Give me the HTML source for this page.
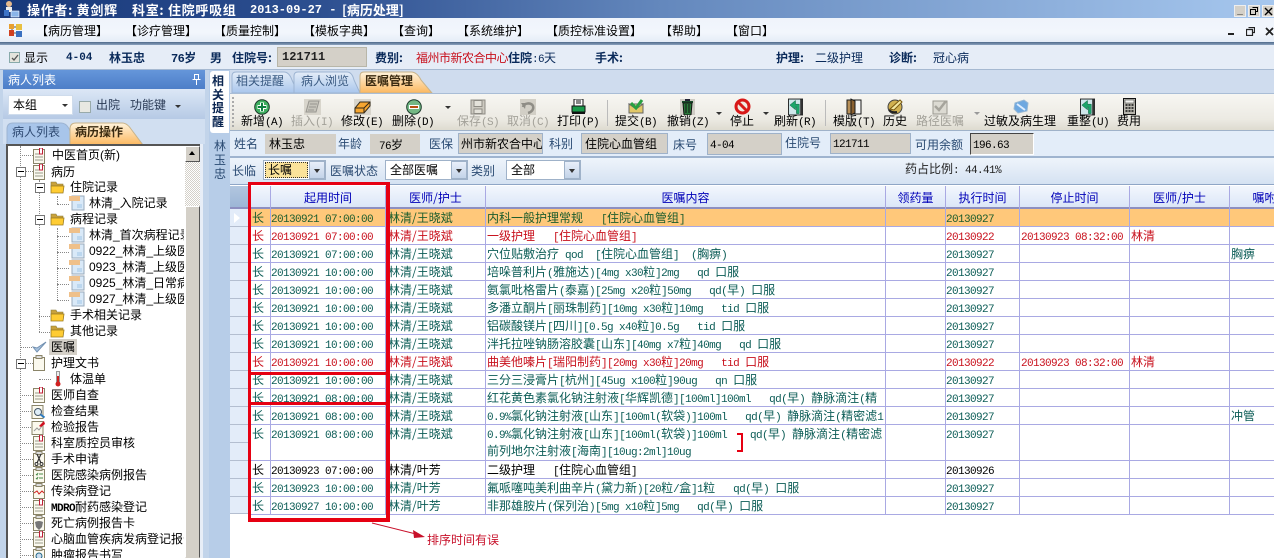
<!DOCTYPE html>
<html><head><meta charset="utf-8"><style>
html,body{margin:0;padding:0;background:#fff}
#p{position:relative;width:1274px;height:558px;overflow:hidden;background:#fff;font:12px/16px "WenQuanYi Zen Hei","Noto Sans CJK SC",sans-serif;color:#000}
#p div,#p span.t,#p svg{position:absolute}
.t{position:absolute;white-space:pre}
i{font:normal 11px "Liberation Mono",monospace;letter-spacing:-.6px}
.b{font-weight:bold}
.box{background:#d4d0c8;border:1px solid #9fb2c9;box-sizing:border-box;padding:1px 0 0 4px;white-space:pre;overflow:hidden;line-height:16px}
.dd{background:#fff;border:1px solid #9fb2c9;box-sizing:border-box;white-space:pre;padding:1px 0 0 4px;line-height:16px}
.ar{background:linear-gradient(#e8effa,#c3d3e8);border:1px solid #9fb2c9;box-sizing:border-box}
.ar:after{content:"";position:absolute;left:4px;top:7px;border:3px solid transparent;border-top:4px solid #333}
.tb{text-align:center;white-space:pre;top:113px;line-height:16px;font-size:12px;width:80px}
.tb.d{color:#a3a199}
.tb.d i{color:#a3a199}
.h{top:186px;height:23px;background:linear-gradient(#f3f7fd,#dbe6f8);color:#0000b8;text-align:center;line-height:23px;box-sizing:border-box;white-space:pre;border-right:1px solid #8f91c5;border-bottom:2px solid #8d8fc0}
.r{left:250px;width:1024px;height:18px;box-sizing:border-box;border-bottom:1px solid #a9a9e3;line-height:17px;color:#0b5c56;white-space:pre}
.r.o{background:#ffc87a;color:#1c5c2c}.r.x{color:#c8101c}.r.k{color:#000}
.r span{position:absolute;top:0;white-space:pre;overflow:hidden}
.a{left:2px}.b1{left:21px}.c{left:138px}.e{left:237px;width:398px}.f{left:696px}.g{left:771px}.m{left:881px}.n{left:981px}
.g1{left:230px;width:20px;height:18px;background:#e3ecf9;box-sizing:border-box;border-bottom:1px solid #b4bed0;border-right:1px solid #b4bed0}
.v{top:186px;height:329px;width:1px;background:#a9a9e3}
.tr{white-space:pre;font:12px/16px "Liberation Sans","WenQuanYi Zen Hei",sans-serif;color:#000}
.dh{border-top:1px dotted #888;height:0}
.dv{border-left:1px dotted #888;width:0}
.pm{width:8px;height:8px;border:1px solid #777;background:#fff}
.pm:after{content:"";position:absolute;left:1px;top:3px;width:6px;height:2px;background:linear-gradient(#000 50%,transparent 50%)}
.rb{background:#e60012;position:absolute}
.ti{color:#fff;font-size:13px;line-height:16px;letter-spacing:.7px;top:2px}
</style></head><body><div id="p">
<svg width="0" height="0" style="left:0;top:0"><defs>
<symbol id="doc" viewBox="0 0 12 16"><rect x=".5" y="1.5" width="11" height="14" fill="#fbf9ee" stroke="#8a8468"/><path d="M2 6h8M2 9h8M2 12h8" stroke="#9a9a8a"/><rect x="6.5" y="0" width="3" height="6" fill="#fff" stroke="#c0203a"/></symbol>
<symbol id="nt" viewBox="0 0 12 16"><rect x=".5" y="2.5" width="11" height="13" fill="#fbf9ee" stroke="#8a8468"/><rect x="3" y=".5" width="6" height="3" fill="#ddd" stroke="#8a8468"/></symbol>
<symbol id="fd" viewBox="0 0 15 14"><path d="M1 2h5l1 2h6v2H1z" fill="#c9a23c" stroke="#8a7a3a" stroke-width=".6"/><path d="M1 13L1 6h13l-1 7z" fill="#ffcc33" stroke="#9a7a1e" stroke-width=".8"/></symbol>
<symbol id="pg" viewBox="0 0 16 16"><rect x="3" y="1" width="12" height="14" fill="#d9e9f8" stroke="#9ab"/><rect x="0" y="1" width="11" height="5" fill="#efc08a"/><rect x="8" y="9" width="5" height="4" fill="#bcd7ef"/></symbol>
<symbol id="rf" viewBox="0 0 16 18"><rect x=".5" y=".5" width="15" height="17" fill="#cfe6ea" stroke="#222"/><path d="M12 16V6H8V2L2 7l6 5V9h1v7z" fill="#1aa56a" stroke="#0a5a3a" stroke-width=".5"/><rect x="13" y="1" width="2" height="16" fill="#333"/></symbol>
</defs></svg>

<!-- title -->
<div style="left:0;top:0;width:1274px;height:18px;background:linear-gradient(90deg,#17387a 0,#2d4f90 25%,#6488bd 52%,#a6c7ee 100%)"></div>
<svg style="left:2px;top:0" width="18" height="19" viewBox="0 0 18 19"><circle cx="7" cy="4" r="3" fill="#e6b98c"/><rect x="4" y="7" width="6" height="5" fill="#eee"/><rect x="2" y="10" width="5" height="6" fill="#3c74c8"/><rect x="9" y="11" width="8" height="6" fill="#8ab4e8" stroke="#fff" stroke-width=".6"/></svg>
<span class="t b ti" style="left:27px">操作者: 黄剑辉</span>
<span class="t b ti" style="left:132px">科室: 住院呼吸组</span>
<span class="t b" style="left:250px;top:2px;color:#fff;font-size:12px;font-family:'Liberation Mono',monospace;line-height:16px">2013-09-27 - </span>
<span class="t b" style="left:342px;top:2px;color:#fff;font-size:13px;line-height:16px">[病历处理]</span>
<div style="left:1234px;top:5px;width:12px;height:12px;background:#d4d0c8;border:1px solid #eee;box-sizing:border-box;font:bold 10px/10px 'Liberation Sans';text-align:center">_</div>
<div style="left:1248px;top:5px;width:12px;height:12px;background:#d4d0c8;border:1px solid #eee;box-sizing:border-box"><svg style="left:1px;top:1px" width="8" height="8"><path d="M2.5.5h5v4h-2M.5 2.5h5v5h-5z" fill="none" stroke="#000"/></svg></div>
<div style="left:1262px;top:5px;width:12px;height:12px;background:#d4d0c8;border:1px solid #eee;box-sizing:border-box"><svg style="left:1px;top:1px" width="9" height="9"><path d="M1 1l7 7M8 1l-7 7" stroke="#000" stroke-width="1.4"/></svg></div>

<!-- menu -->
<div style="left:0;top:18px;width:1274px;height:25px;background:linear-gradient(#eff4fb,#f2f6fc 60%,#e3ebf6)"></div>
<div style="left:0;top:42px;width:1274px;height:3px;background:linear-gradient(#4f6a8a,#8ba3bf)"></div>
<svg style="left:9px;top:24px" width="14" height="14"><rect x="0" y="0" width="5" height="5" fill="#e8a030"/><rect x="7" y="0" width="6" height="6" fill="#e8c040"/><rect x="0" y="6" width="5" height="6" fill="#d04020"/><rect x="7" y="7" width="6" height="6" fill="#3a70c0"/><path d="M5 3h2M5 9h2M3 5v1" stroke="#555"/></svg>
<span class="t" style="left:36px;top:23px">【病历管理】</span>
<span class="t" style="left:125px;top:23px">【诊疗管理】</span>
<span class="t" style="left:214px;top:23px">【质量控制】</span>
<span class="t" style="left:303px;top:23px">【模板字典】</span>
<span class="t" style="left:392px;top:23px">【查询】</span>
<span class="t" style="left:457px;top:23px">【系统维护】</span>
<span class="t" style="left:546px;top:23px">【质控标准设置】</span>
<span class="t" style="left:660px;top:23px">【帮助】</span>
<span class="t" style="left:726px;top:23px">【窗口】</span>
<div style="left:1228px;top:33px;width:6px;height:2px;background:#222"></div>
<svg style="left:1246px;top:27px" width="9" height="9"><path d="M2.5.5h6v5h-2M.5 2.5h6v6h-6z" fill="none" stroke="#222" stroke-width="1.2"/></svg>
<svg style="left:1265px;top:27px" width="9" height="9"><path d="M1 1l7 7M8 1l-7 7" stroke="#222" stroke-width="1.8"/></svg>

<!-- info -->
<div style="left:0;top:45px;width:1274px;height:25px;background:#e6edf7;border-bottom:1px solid #a6b9d1;box-sizing:border-box"></div>
<div style="left:9px;top:52px;width:11px;height:11px;border:1px solid #8aa;background:#e4e4dc;box-sizing:border-box"><svg style="left:1px;top:1px" width="8" height="8"><path d="M1 4l2 2 4-5" stroke="#555" stroke-width="1.3" fill="none"/></svg></div>
<span class="t" style="left:24px;top:50px">显示</span>
<span class="t b" style="left:66px;top:50px;color:#0a2a5a;font:bold 11px/16px 'Liberation Mono'">4-04</span>
<span class="t b" style="left:109px;top:50px;color:#0a2a5a">林玉忠</span>
<span class="t b" style="left:171px;top:50px;color:#0a2a5a"><i style="font-weight:bold;font-size:12px">76</i>岁</span>
<span class="t b" style="left:210px;top:50px;color:#0a2a5a">男</span>
<span class="t b" style="left:232px;top:50px;color:#0a2a5a">住院号:</span>
<div style="left:277px;top:47px;width:90px;height:20px;background:#d4d0c8;border:1px solid #b8b6a8;box-sizing:border-box;font:bold 12px/18px 'Liberation Mono';padding-left:4px;color:#222">121711</div>
<span class="t b" style="left:375px;top:50px;color:#0a2a5a">费别:</span>
<span class="t" style="left:416px;top:50px;color:#c8101c;letter-spacing:-.5px">福州市新农合中心</span>
<span class="t b" style="left:508px;top:50px;color:#0a2a5a">住院</span>
<span class="t" style="left:532px;top:50px;color:#0a2a5a"><i>:6</i>天</span>
<span class="t b" style="left:595px;top:50px;color:#0a2a5a">手术:</span>
<span class="t b" style="left:776px;top:50px;color:#0a2a5a">护理:</span>
<span class="t" style="left:815px;top:50px;color:#0a2a5a">二级护理</span>
<span class="t b" style="left:889px;top:50px;color:#0a2a5a">诊断:</span>
<span class="t" style="left:933px;top:50px;color:#0a2a5a">冠心病</span>

<!-- left panel -->
<div style="left:0;top:70px;width:230px;height:488px;background:#c2d4ea"></div>
<div style="left:3px;top:70px;width:202px;height:19px;background:linear-gradient(#6596da,#4d7ec8);color:#fff;line-height:19px;padding-left:5px;box-sizing:border-box">病人列表</div>
<svg style="left:192px;top:74px" width="9" height="11"><path d="M2.5.5h4v5h-4zM.5 5.5h8M4.5 6v5" stroke="#fff" fill="none"/></svg>
<div style="left:3px;top:89px;width:202px;height:30px;background:linear-gradient(#dce7f6,#b6cae5)"></div>
<div class="dd" style="left:8px;top:95px;width:65px;height:20px;border-color:#cfdcec">本组</div>
<div style="left:62px;top:104px;border:3px solid transparent;border-top:3px solid #333;width:0;height:0"></div>
<div style="left:79px;top:101px;width:12px;height:12px;background:#e8e8e2;border:1px solid #9aa;box-sizing:border-box"></div>
<span class="t" style="left:96px;top:97px;color:#2a3a55">出院</span>
<span class="t" style="left:130px;top:97px;color:#2a3a55">功能键</span>
<div style="left:175px;top:105px;border:3px solid transparent;border-top:3px solid #333;width:0;height:0"></div>
<div style="left:3px;top:119px;width:202px;height:25px;background:#d1dff1"></div>
<svg style="left:5px;top:121px" width="145" height="24"><defs><linearGradient id="og" x1="0" y1="0" x2="0" y2="1"><stop offset="0" stop-color="#fff3dc"/><stop offset="1" stop-color="#fcb860"/></linearGradient></defs><path d="M2 24V8Q2 2 8 2h48q6 0 9 8l6 14z" fill="#a8c5ea" stroke="#9db4d2"/><path d="M65 24V8Q65 2 71 2h46q5 0 9 6l12 16z" fill="url(#og)" stroke="#c8b38a"/></svg>
<span class="t" style="left:12px;top:124px;color:#2f4a72">病人列表</span>
<span class="t b" style="left:75px;top:124px;color:#3a2a10">病历操作</span>

<!-- tree -->
<div style="left:6px;top:144px;width:195px;height:414px;background:#fff;border:2px solid #555;border-bottom:0;box-sizing:border-box"></div>
<div style="left:185px;top:146px;width:15px;height:412px;background:repeating-conic-gradient(#d4d0c8 0 25%,#fff 0 50%) 0 0/2px 2px"></div>
<div style="left:185px;top:146px;width:15px;height:16px;background:#d4d0c8;border:1px solid;border-color:#fff #555 #555 #fff;box-sizing:border-box"></div>
<div style="left:189px;top:151px;border:3px solid transparent;border-bottom:4px solid #000;border-top:0;width:0;height:0"></div>
<div style="left:185px;top:206px;width:15px;height:352px;background:#d4d0c8;border:1px solid;border-color:#fff #555 #d4d0c8 #fff;box-sizing:border-box"></div>
<div style="left:8px;top:146px;width:176px;height:412px;overflow:hidden">
<div class="dv" style="left:12px;top:0;height:412px"></div>
<div class="dv" style="left:31px;top:34px;height:152px"></div>
<div class="dv" style="left:49px;top:50px;height:8px"></div>
<div class="dv" style="left:49px;top:82px;height:72px"></div>
<div class="dv" style="left:49px;top:226px;height:8px"></div>
<div class="dh" style="left:12px;top:9px;width:13px"></div><svg style="left:25px;top:2px" width="12" height="16"><use href="#doc"/></svg><span class="t tr" style="left:44px;top:1px">中医首页(新)</span>
<div class="dh" style="left:16px;top:25px;width:9px"></div><div class="pm" style="left:8px;top:21px"></div><svg style="left:25px;top:18px" width="12" height="16"><use href="#doc"/></svg><span class="t tr" style="left:43px;top:18px">病历</span>
<div class="pm" style="left:27px;top:37px"></div><svg style="left:42px;top:34px" width="15" height="14"><use href="#fd"/></svg><span class="t tr" style="left:62px;top:33px">住院记录</span>
<div class="dh" style="left:49px;top:58px;width:12px"></div><svg style="left:61px;top:49px" width="16" height="16"><use href="#pg"/></svg><span class="t tr" style="left:81px;top:49px">林清_入院记录</span>
<div class="pm" style="left:27px;top:69px"></div><svg style="left:42px;top:66px" width="15" height="14"><use href="#fd"/></svg><span class="t tr" style="left:62px;top:65px">病程记录</span>
<div class="dh" style="left:49px;top:90px;width:12px"></div><svg style="left:61px;top:81px" width="16" height="16"><use href="#pg"/></svg><span class="t tr" style="left:81px;top:81px">林清_首次病程记录</span>
<div class="dh" style="left:49px;top:106px;width:12px"></div><svg style="left:61px;top:97px" width="16" height="16"><use href="#pg"/></svg><span class="t tr" style="left:81px;top:97px">0922_林清_上级医师</span>
<div class="dh" style="left:49px;top:122px;width:12px"></div><svg style="left:61px;top:113px" width="16" height="16"><use href="#pg"/></svg><span class="t tr" style="left:81px;top:113px">0923_林清_上级医师</span>
<div class="dh" style="left:49px;top:138px;width:12px"></div><svg style="left:61px;top:129px" width="16" height="16"><use href="#pg"/></svg><span class="t tr" style="left:81px;top:129px">0925_林清_日常病程</span>
<div class="dh" style="left:49px;top:154px;width:12px"></div><svg style="left:61px;top:145px" width="16" height="16"><use href="#pg"/></svg><span class="t tr" style="left:81px;top:145px">0927_林清_上级医师</span>
<div class="dh" style="left:31px;top:170px;width:11px"></div><svg style="left:42px;top:162px" width="15" height="14"><use href="#fd"/></svg><span class="t tr" style="left:62px;top:161px">手术相关记录</span>
<div class="dh" style="left:31px;top:186px;width:11px"></div><svg style="left:42px;top:178px" width="15" height="14"><use href="#fd"/></svg><span class="t tr" style="left:62px;top:177px">其他记录</span>
<div class="dh" style="left:12px;top:201px;width:12px"></div><svg style="left:24px;top:194px" width="15" height="14"><path d="M1 7l4 5 9-10-9 6z" fill="#a9c4e0" stroke="#7290b0"/></svg><div style="left:41px;top:193px;width:28px;height:16px;background:#d4d0c8"></div><span class="t tr" style="left:43px;top:193px">医嘱</span>
<div class="dh" style="left:16px;top:217px;width:9px"></div><div class="pm" style="left:8px;top:213px"></div><svg style="left:25px;top:209px" width="12" height="16"><use href="#nt"/></svg><span class="t tr" style="left:43px;top:209px">护理文书</span>
<div class="dh" style="left:31px;top:233px;width:12px"></div><svg style="left:45px;top:225px" width="10" height="16"><rect x="3.5" y=".5" width="3" height="11" fill="#eee" stroke="#999"/><rect x="4" y="5" width="2" height="6" fill="#d02020"/><circle cx="5" cy="13" r="2.5" fill="#d02020"/></svg><span class="t tr" style="left:62px;top:225px">体温单</span>
<div class="dh" style="left:12px;top:249px;width:13px"></div><svg style="left:25px;top:241px" width="12" height="16"><use href="#doc"/></svg><span class="t tr" style="left:43px;top:241px">医师自查</span>
<div class="dh" style="left:12px;top:265px;width:11px"></div><svg style="left:23px;top:257px" width="15" height="16"><rect x="1" y="2.5" width="11" height="13" fill="#fbf9ee" stroke="#8a8468"/><circle cx="7" cy="9" r="3.5" fill="#dfeef8" stroke="#456"/><path d="M9.500 11.500l4 3" stroke="#2a7ac0" stroke-width="2"/></svg><span class="t tr" style="left:43px;top:257px">检查结果</span>
<div class="dh" style="left:12px;top:281px;width:11px"></div><svg style="left:23px;top:273px" width="15" height="16"><rect x="1" y="2.5" width="11" height="13" fill="#fbf9ee" stroke="#8a8468"/><path d="M3 12l3-3 2 2 3-4" stroke="#999" fill="none"/><path d="M8 7l5-5 1 3-4 3z" fill="#d01020"/></svg><span class="t tr" style="left:43px;top:273px">检验报告</span>
<div class="dh" style="left:12px;top:297px;width:13px"></div><svg style="left:25px;top:289px" width="12" height="16"><use href="#doc"/></svg><span class="t tr" style="left:43px;top:289px">科室质控员审核</span>
<div class="dh" style="left:12px;top:313px;width:13px"></div><svg style="left:25px;top:305px" width="12" height="16"><use href="#nt"/><path d="M4 3l4 9M8 3l-4 9" stroke="#333" stroke-width="1.2"/><circle cx="3.500" cy="13" r="1.500" fill="none" stroke="#333"/><circle cx="8.500" cy="13" r="1.500" fill="none" stroke="#333"/></svg><span class="t tr" style="left:43px;top:305px">手术申请</span>
<div class="dh" style="left:12px;top:329px;width:13px"></div><svg style="left:25px;top:321px" width="12" height="16"><use href="#nt"/><path d="M3 7l1 1 1-2M3 11l1 1 1-2M6 7h4M6 11h4" stroke="#4a8a4a" fill="none"/></svg><span class="t tr" style="left:43px;top:321px">医院感染病例报告</span>
<div class="dh" style="left:12px;top:345px;width:13px"></div><svg style="left:25px;top:337px" width="12" height="16"><use href="#nt"/><path d="M1 10l3-2 2 3 3-3 2 2" stroke="#d02020" fill="none"/></svg><span class="t tr" style="left:43px;top:337px">传染病登记</span>
<div class="dh" style="left:12px;top:361px;width:13px"></div><svg style="left:25px;top:353px" width="12" height="16"><use href="#doc"/></svg><span class="t tr" style="left:43px;top:353px"><i style="font-weight:bold">MDRO</i>耐药感染登记</span>
<div class="dh" style="left:12px;top:377px;width:13px"></div><svg style="left:25px;top:369px" width="12" height="16"><use href="#nt"/><path d="M2 7q4-2 8 0l-1 5-3 3-3-3z" fill="#777"/></svg><span class="t tr" style="left:43px;top:369px">死亡病例报告卡</span>
<div class="dh" style="left:12px;top:393px;width:13px"></div><svg style="left:25px;top:385px" width="12" height="16"><use href="#doc"/></svg><span class="t tr" style="left:43px;top:385px">心脑血管疾病发病登记报告</span>
<div class="dh" style="left:12px;top:409px;width:13px"></div><svg style="left:25px;top:401px" width="12" height="16"><use href="#nt"/><circle cx="6" cy="9" r="3" fill="#cde" stroke="#268"/></svg><span class="t tr" style="left:43px;top:401px">肿瘤报告书写</span>
</div>
<div style="left:200px;top:144px;width:3px;height:414px;background:#e8eef7"></div>

<!-- vertical tabs -->
<div style="left:209px;top:70px;width:21px;height:488px;background:#b7cde8"></div>
<div style="left:210px;top:71px;width:19px;height:62px;background:#fff;border-radius:3px 0 0 3px"></div>
<span class="t b" style="left:212px;top:74px;width:13px;line-height:13.5px;white-space:normal;color:#0a2550;font-size:12px">相关提醒</span>
<span class="t" style="left:214px;top:139px;width:13px;line-height:14px;white-space:normal;color:#2a4a72">林玉忠</span>

<!-- right top -->
<div style="left:230px;top:70px;width:1044px;height:23px;background:#cfdcee"></div>
<svg style="left:230px;top:70px" width="210" height="24"><defs><linearGradient id="og2" x1="0" y1="0" x2="0" y2="1"><stop offset="0" stop-color="#fff3dc"/><stop offset="1" stop-color="#fcb860"/></linearGradient><linearGradient id="bl" x1="0" y1="0" x2="0" y2="1"><stop offset="0" stop-color="#e4edf8"/><stop offset="1" stop-color="#a9c6ec"/></linearGradient></defs><path d="M2 23V6Q2 2 6 2h48q5 0 8 8l6 13z" fill="url(#bl)" stroke="#9db4d2"/><path d="M64 23V6Q64 2 68 2h49q5 0 7 8l6 13z" fill="url(#bl)" stroke="#9db4d2"/><path d="M130 23V6Q130 2 134 2h47q6 0 10 8l11 13z" fill="url(#og2)" stroke="#c8b38a"/></svg>
<span class="t" style="left:236px;top:73px;color:#3a5a82">相关提醒</span>
<span class="t" style="left:301px;top:73px;color:#3a5a82">病人浏览</span>
<span class="t b" style="left:365px;top:73px;color:#3a2a10">医嘱管理</span>

<!-- toolbar -->
<div style="left:230px;top:93px;width:1044px;height:38px;background:linear-gradient(#f7f6f2,#eceae3 70%,#dedbd0);border-top:1px solid #a9bdd6;border-bottom:1px solid #9fb2c9;box-sizing:border-box"></div>
<div class="dv" style="left:232px;top:97px;height:30px;border-left:2px dotted #aaa"></div>
<div style="left:607px;top:100px;width:1px;height:26px;background:#bbb"></div>
<div style="left:825px;top:100px;width:1px;height:26px;background:#bbb"></div>
<!-- icons -->
<svg style="left:254px;top:99px" width="16" height="16"><circle cx="8" cy="8" r="7.300" fill="#40b060" stroke="#1a3a2a"/><path d="M8 3.500v9M3.500 8h9" stroke="#fff" stroke-width="4"/><path d="M8 4v8M4 8h8" stroke="#0f8040" stroke-width="2"/></svg>
<svg style="left:304px;top:99px" width="17" height="16"><rect width="17" height="16" fill="#d8d5cc"/><path d="M5 2h10l-3 11H2z" fill="#c6c4bb" stroke="#989690"/><path d="M6 5h7M5 8h7M4 11h6" stroke="#989690"/></svg>
<svg style="left:354px;top:99px" width="17" height="16"><rect width="17" height="16" fill="#d8d5cc"/><path d="M1 14V9l5-6h10v4l-6 7z" fill="#f6a630" stroke="#332a1a"/><path d="M1 9h9l6-6" stroke="#332a1a" fill="none"/><path d="M10 9v5" stroke="#332a1a"/></svg>
<svg style="left:406px;top:99px" width="16" height="16"><circle cx="8" cy="8" r="7.300" fill="#74b884" stroke="#1a3a2a"/><rect x="3" y="6" width="10" height="4" fill="#fff"/><rect x="4" y="7" width="8" height="2" fill="#b85010"/></svg>
<svg style="left:470px;top:99px" width="16" height="16"><rect x="1" y="1" width="14" height="14" fill="#ccc9c0" stroke="#8e8c85"/><rect x="4" y="1.500" width="8" height="6" fill="#e4e2da" stroke="#8e8c85"/><rect x="4" y="10" width="8" height="4.500" fill="#e4e2da" stroke="#8e8c85"/></svg>
<svg style="left:520px;top:99px" width="16" height="16"><rect width="16" height="16" fill="#d2cfc6"/><path d="M3 8c1-4 8-5 10-1 1 3-1 6-5 7" fill="none" stroke="#8f8d86" stroke-width="2.500"/><path d="M1 4l5 0-1 6z" fill="#8f8d86"/></svg>
<svg style="left:571px;top:99px" width="15" height="16"><rect x="3" y="0" width="9" height="7" fill="#fff" stroke="#111"/><path d="M5 2h5M5 4h5" stroke="#111"/><path d="M1 7h13v6H1z" fill="#1a9a4a" stroke="#111"/><rect x="1" y="13" width="13" height="2" fill="#111"/></svg>
<svg style="left:628px;top:99px" width="16" height="16"><path d="M1 5h14v9H1z" fill="#e2c868" stroke="#666"/><path d="M1 5l7 5 7-5z" fill="#f3e6a6" stroke="#666"/><path d="M3 4l5 5 6-8" stroke="#28a040" stroke-width="3" fill="none"/></svg>
<svg style="left:680px;top:99px" width="15" height="16"><rect width="15" height="16" fill="#cfccc4"/><rect x="5" y="0" width="5" height="2" fill="#223"/><rect x="2" y="2" width="11" height="2" fill="#1a4a2a"/><path d="M3 4h9l-1 12H4z" fill="#2a7a3a" stroke="#111"/><path d="M6 5v9M9 5v9" stroke="#111"/></svg>
<svg style="left:734px;top:98px" width="17" height="17"><circle cx="8.500" cy="8.500" r="6.500" fill="#f0e8e0" stroke="#d81818" stroke-width="3"/><path d="M4 4l9 9" stroke="#d81818" stroke-width="3"/></svg>
<svg style="left:788px;top:98px" width="15" height="18"><use href="#rf"/></svg>
<svg style="left:846px;top:98px" width="16" height="18"><path d="M1 2l7 0v14H1z" fill="#b89058" stroke="#1a1a1a"/><rect x="8" y="2" width="7" height="14" fill="#f4f4f4" stroke="#1a1a1a"/><path d="M5 1v16l4-2V3z" fill="#8a6030" stroke="#1a1a1a"/></svg>
<svg style="left:887px;top:98px" width="16" height="17"><circle cx="8" cy="9" r="7" fill="#d0b050" stroke="#444"/><path d="M3 11l10-9 2 2-8 8z" fill="#f4e8a0" stroke="#7a5a10"/><path d="M2 12q3 3 8 2" stroke="#222" stroke-width="2" fill="none"/></svg>
<svg style="left:932px;top:99px" width="16" height="16"><rect x="1" y="2" width="14" height="13" fill="#dcdad2" stroke="#9a9890"/><path d="M3 7l4 4 7-9" stroke="#a6a49c" stroke-width="2.500" fill="none"/></svg>
<svg style="left:1013px;top:99px" width="16" height="15"><path d="M2 4l9-3 4 3-1 8-9 2-4-4z" fill="#6ea8e0" stroke="#98b8d4"/><path d="M4 5l8 6" stroke="#dfeeff" stroke-width="2"/></svg>
<svg style="left:1080px;top:98px" width="15" height="18"><use href="#rf"/></svg>
<svg style="left:1123px;top:98px" width="13" height="17"><rect x=".5" y=".5" width="12" height="16" fill="#b8b6ae" stroke="#111"/><rect x="2" y="2" width="9" height="3" fill="#f2f2ee" stroke="#333" stroke-width=".5"/><path d="M2.500 7h2M5.500 7h2M8.500 7h2M2.500 10h2M5.500 10h2M8.500 10h2M2.500 13h2M5.500 13h2M8.500 13h2" stroke="#111" stroke-width="1.500"/></svg>
<div style="left:445px;top:106px;border:3px solid transparent;border-top:3px solid #333;width:0;height:0"></div>
<div style="left:716px;top:112px;border:3px solid transparent;border-top:3px solid #333;width:0;height:0"></div>
<div style="left:763px;top:112px;border:3px solid transparent;border-top:3px solid #333;width:0;height:0"></div>
<div style="left:974px;top:112px;border:3px solid transparent;border-top:3px solid #999;width:0;height:0"></div>
<!-- labels -->
<div class="tb" style="left:222px">新增<i>(A)</i></div>
<div class="tb d" style="left:272px">插入<i>(I)</i></div>
<div class="tb" style="left:322px">修改<i>(E)</i></div>
<div class="tb" style="left:373px">删除<i>(D)</i></div>
<div class="tb d" style="left:438px">保存<i>(S)</i></div>
<div class="tb d" style="left:488px">取消<i>(C)</i></div>
<div class="tb" style="left:538px">打印<i>(P)</i></div>
<div class="tb" style="left:596px">提交<i>(B)</i></div>
<div class="tb" style="left:648px">撤销<i>(Z)</i></div>
<div class="tb" style="left:702px">停止</div>
<div class="tb" style="left:755px">刷新<i>(R)</i></div>
<div class="tb" style="left:814px">模版<i>(T)</i></div>
<div class="tb" style="left:855px">历史</div>
<div class="tb d" style="left:900px">路径医嘱</div>
<div class="tb" style="left:980px">过敏及病生理</div>
<div class="tb" style="left:1048px">重整<i>(U)</i></div>
<div class="tb" style="left:1089px">费用</div>

<!-- patient row -->
<div style="left:230px;top:131px;width:1044px;height:27px;background:#e3edf9;border-bottom:2px solid #9fb4cf;box-sizing:border-box"></div>
<div style="left:230px;top:158px;width:1044px;height:27px;background:linear-gradient(#eef4fb,#d5e2f2);border-bottom:1px solid #8fa6c6;box-sizing:border-box"></div>
<span class="t" style="left:234px;top:136px;color:#2a4a72">姓名</span>
<div class="box" style="left:265px;top:134px;width:71px;height:20px;border:0;border-right:0;padding-top:2px">林玉忠</div>
<span class="t" style="left:338px;top:136px;color:#2a4a72">年龄</span>
<div class="box" style="left:370px;top:134px;width:50px;height:20px;border-color:#d4d0c8;padding:2px 0 0 8px"><i>76</i>岁</div>
<span class="t" style="left:429px;top:136px;color:#2a4a72">医保</span>
<div class="box" style="left:458px;top:133px;width:85px;height:21px;padding:2px 0 0 2px">州市新农合中心</div>
<span class="t" style="left:549px;top:136px;color:#2a4a72">科别</span>
<div class="box" style="left:581px;top:133px;width:87px;height:21px;padding:2px 0 0 3px">住院心血管组</div>
<span class="t" style="left:673px;top:137px;color:#2a4a72">床号</span>
<div class="box" style="left:707px;top:133px;width:75px;height:22px;padding:2px 0 0 2px"><i>4-04</i></div>
<span class="t" style="left:785px;top:135px;color:#2a4a72">住院号</span>
<div class="box" style="left:830px;top:133px;width:81px;height:21px;padding:1px 0 0 2px"><i>121711</i></div>
<span class="t" style="left:915px;top:137px;color:#2a4a72">可用余额</span>
<div class="box" style="left:970px;top:133px;width:64px;height:22px;border:1px solid;border-color:#444 #fff #fff #444;padding:2px 0 0 2px"><i>196.63</i></div>

<!-- filter -->
<span class="t" style="left:232px;top:163px;color:#2a4a72">长临</span>
<div class="dd" style="left:263px;top:160px;width:63px;height:20px"></div>
<div style="left:265px;top:162px;width:43px;height:16px;background:#fbe39a;border:1px dotted #333;box-sizing:border-box;line-height:14px;padding-left:2px;white-space:pre">长嘱</div>
<div class="ar" style="left:309px;top:161px;width:16px;height:18px"></div>
<span class="t" style="left:330px;top:163px;color:#2a4a72">医嘱状态</span>
<div class="dd" style="left:385px;top:160px;width:83px;height:20px;padding-left:4px">全部医嘱</div>
<div class="ar" style="left:451px;top:161px;width:16px;height:18px"></div>
<span class="t" style="left:471px;top:163px;color:#2a4a72">类别</span>
<div class="dd" style="left:506px;top:160px;width:75px;height:20px;padding-left:4px">全部</div>
<div class="ar" style="left:564px;top:161px;width:16px;height:18px"></div>
<span class="t" style="left:905px;top:161px;color:#222">药占比例<i>: 44.41%</i></span>

<!-- grid header -->
<div class="h" style="left:230px;width:20px;background:linear-gradient(#b2c6df,#9db6d6)"></div>
<div class="h" style="left:250px;width:21px"></div>
<div class="h" style="left:271px;width:115px">起用时间</div>
<div class="h" style="left:386px;width:100px">医师/护士</div>
<div class="h" style="left:486px;width:400px">医嘱内容</div>
<div class="h" style="left:886px;width:60px">领药量</div>
<div class="h" style="left:946px;width:74px">执行时间</div>
<div class="h" style="left:1020px;width:110px">停止时间</div>
<div class="h" style="left:1130px;width:100px">医师/护士</div>
<div class="h" style="left:1230px;width:70px">嘱咐</div>

<!-- gutter -->
<div class="g1" style="top:209px;background:#e3ecf9"></div><div style="left:234px;top:213px;border:5px solid transparent;border-left:6px solid #fff;width:0;height:0;z-index:3"></div>
<div class="g1" style="top:227px"></div><div class="g1" style="top:245px"></div><div class="g1" style="top:263px"></div><div class="g1" style="top:281px"></div><div class="g1" style="top:299px"></div><div class="g1" style="top:317px"></div><div class="g1" style="top:335px"></div><div class="g1" style="top:353px"></div><div class="g1" style="top:371px"></div><div class="g1" style="top:389px"></div><div class="g1" style="top:407px"></div><div class="g1" style="top:425px"></div><div class="g1" style="top:443px"></div><div class="g1" style="top:461px"></div><div class="g1" style="top:479px"></div><div class="g1" style="top:497px;height:17px"></div>

<!-- rows -->
<div class="r o" style="top:209px"><span class="a">长</span><span class="b1"><i>20130921 07:00:00</i></span><span class="c">林清/王晓斌</span><span class="e">内科一般护理常规<i>   [</i>住院心血管组<i>]</i></span><span class="f"><i>20130927</i></span></div>
<div class="r x" style="top:227px"><span class="a">长</span><span class="b1"><i>20130921 07:00:00</i></span><span class="c">林清/王晓斌</span><span class="e">一级护理<i>   [</i>住院心血管组<i>]</i></span><span class="f"><i>20130922</i></span><span class="g"><i>20130923 08:32:00</i></span><span class="m">林清</span></div>
<div class="r" style="top:245px"><span class="a">长</span><span class="b1"><i>20130921 07:00:00</i></span><span class="c">林清/王晓斌</span><span class="e">穴位贴敷治疗<i> qod  [</i>住院心血管组<i>]  (</i>胸痹<i>)</i></span><span class="f"><i>20130927</i></span><span class="n">胸痹</span></div>
<div class="r" style="top:263px"><span class="a">长</span><span class="b1"><i>20130921 10:00:00</i></span><span class="c">林清/王晓斌</span><span class="e">培哚普利片<i>(</i>雅施达<i>)[4mg x30</i>粒<i>]2mg   qd </i>口服</span><span class="f"><i>20130927</i></span></div>
<div class="r" style="top:281px"><span class="a">长</span><span class="b1"><i>20130921 10:00:00</i></span><span class="c">林清/王晓斌</span><span class="e">氨氯吡格雷片<i>(</i>泰嘉<i>)[25mg x20</i>粒<i>]50mg   qd(</i>早<i>) </i>口服</span><span class="f"><i>20130927</i></span></div>
<div class="r" style="top:299px"><span class="a">长</span><span class="b1"><i>20130921 10:00:00</i></span><span class="c">林清/王晓斌</span><span class="e">多潘立酮片<i>[</i>丽珠制药<i>][10mg x30</i>粒<i>]10mg   tid </i>口服</span><span class="f"><i>20130927</i></span></div>
<div class="r" style="top:317px"><span class="a">长</span><span class="b1"><i>20130921 10:00:00</i></span><span class="c">林清/王晓斌</span><span class="e">铝碳酸镁片<i>[</i>四川<i>][0.5g x40</i>粒<i>]0.5g   tid </i>口服</span><span class="f"><i>20130927</i></span></div>
<div class="r" style="top:335px"><span class="a">长</span><span class="b1"><i>20130921 10:00:00</i></span><span class="c">林清/王晓斌</span><span class="e">泮托拉唑钠肠溶胶囊<i>[</i>山东<i>][40mg x7</i>粒<i>]40mg   qd </i>口服</span><span class="f"><i>20130927</i></span></div>
<div class="r x" style="top:353px"><span class="a">长</span><span class="b1"><i>20130921 10:00:00</i></span><span class="c">林清/王晓斌</span><span class="e">曲美他嗪片<i>[</i>瑞阳制药<i>][20mg x30</i>粒<i>]20mg   tid </i>口服</span><span class="f"><i>20130922</i></span><span class="g"><i>20130923 08:32:00</i></span><span class="m">林清</span></div>
<div class="r" style="top:371px"><span class="a">长</span><span class="b1"><i>20130921 10:00:00</i></span><span class="c">林清/王晓斌</span><span class="e">三分三浸膏片<i>[</i>杭州<i>][45ug x100</i>粒<i>]90ug   qn </i>口服</span><span class="f"><i>20130927</i></span></div>
<div class="r" style="top:389px"><span class="a">长</span><span class="b1"><i>20130921 08:00:00</i></span><span class="c">林清/王晓斌</span><span class="e">红花黄色素氯化钠注射液<i>[</i>华辉凯德<i>][100ml]100ml   qd(</i>早<i>) </i>静脉滴注<i>(</i>精</span><span class="f"><i>20130927</i></span></div>
<div class="r" style="top:407px"><span class="a">长</span><span class="b1"><i>20130921 08:00:00</i></span><span class="c">林清/王晓斌</span><span class="e"><i>0.9%</i>氯化钠注射液<i>[</i>山东<i>][100ml(</i>软袋<i>)]100ml   qd(</i>早<i>) </i>静脉滴注<i>(</i>精密滤<i>1</i></span><span class="f"><i>20130927</i></span><span class="n">冲管</span></div>
<div class="r" style="top:425px;height:36px"><span class="a">长</span><span class="b1"><i>20130921 08:00:00</i></span><span class="c">林清/王晓斌</span><span class="e" style="height:35px"><i>0.9%</i>氯化钠注射液<i>[</i>山东<i>][100ml(</i>软袋<i>)]100ml</i><span style="left:263px;top:0"><i>qd(</i>早<i>) </i>静脉滴注<i>(</i>精密滤</span><br>前列地尔注射液<i>[</i>海南<i>][10ug:2ml]10ug</i></span><span class="f"><i>20130927</i></span></div>
<div class="r k" style="top:461px"><span class="a">长</span><span class="b1"><i>20130923 07:00:00</i></span><span class="c">林清/叶芳</span><span class="e">二级护理<i>   [</i>住院心血管组<i>]</i></span><span class="f"><i>20130926</i></span></div>
<div class="r" style="top:479px"><span class="a">长</span><span class="b1"><i>20130923 10:00:00</i></span><span class="c">林清/叶芳</span><span class="e">氟哌噻吨美利曲辛片<i>(</i>黛力新<i>)[20</i>粒<i>/</i>盒<i>]1</i>粒<i>   qd(</i>早<i>) </i>口服</span><span class="f"><i>20130927</i></span></div>
<div class="r" style="top:497px"><span class="a">长</span><span class="b1"><i>20130927 10:00:00</i></span><span class="c">林清/叶芳</span><span class="e">非那雄胺片<i>(</i>保列治<i>)[5mg x10</i>粒<i>]5mg   qd(</i>早<i>) </i>口服</span><span class="f"><i>20130927</i></span></div>

<div class="v" style="left:270px"></div><div class="v" style="left:385px"></div><div class="v" style="left:485px"></div><div class="v" style="left:885px"></div><div class="v" style="left:945px"></div><div class="v" style="left:1019px"></div><div class="v" style="left:1129px"></div><div class="v" style="left:1229px"></div>

<!-- annotations -->
<div class="rb" style="left:248px;top:182px;width:142px;height:3px"></div>
<div class="rb" style="left:248px;top:518px;width:142px;height:4px"></div>
<div class="rb" style="left:248px;top:182px;width:3px;height:340px"></div>
<div class="rb" style="left:386px;top:182px;width:4px;height:340px"></div>
<div class="rb" style="left:250px;top:372px;width:138px;height:3px"></div>
<div class="rb" style="left:250px;top:402px;width:138px;height:3px"></div>
<div class="rb" style="left:737px;top:433px;width:6px;height:2px"></div>
<div class="rb" style="left:741px;top:433px;width:2px;height:19px"></div>
<div class="rb" style="left:737px;top:450px;width:6px;height:2px"></div>
<svg style="left:370px;top:520px" width="56" height="20"><path d="M2 3L46 14" stroke="#c8102a"/><path d="M55 17L43 10l1 8z" fill="#c8102a"/></svg>
<span class="t" style="left:427px;top:532px;color:#c8102a">排序时间有误</span>
</div></body></html>
